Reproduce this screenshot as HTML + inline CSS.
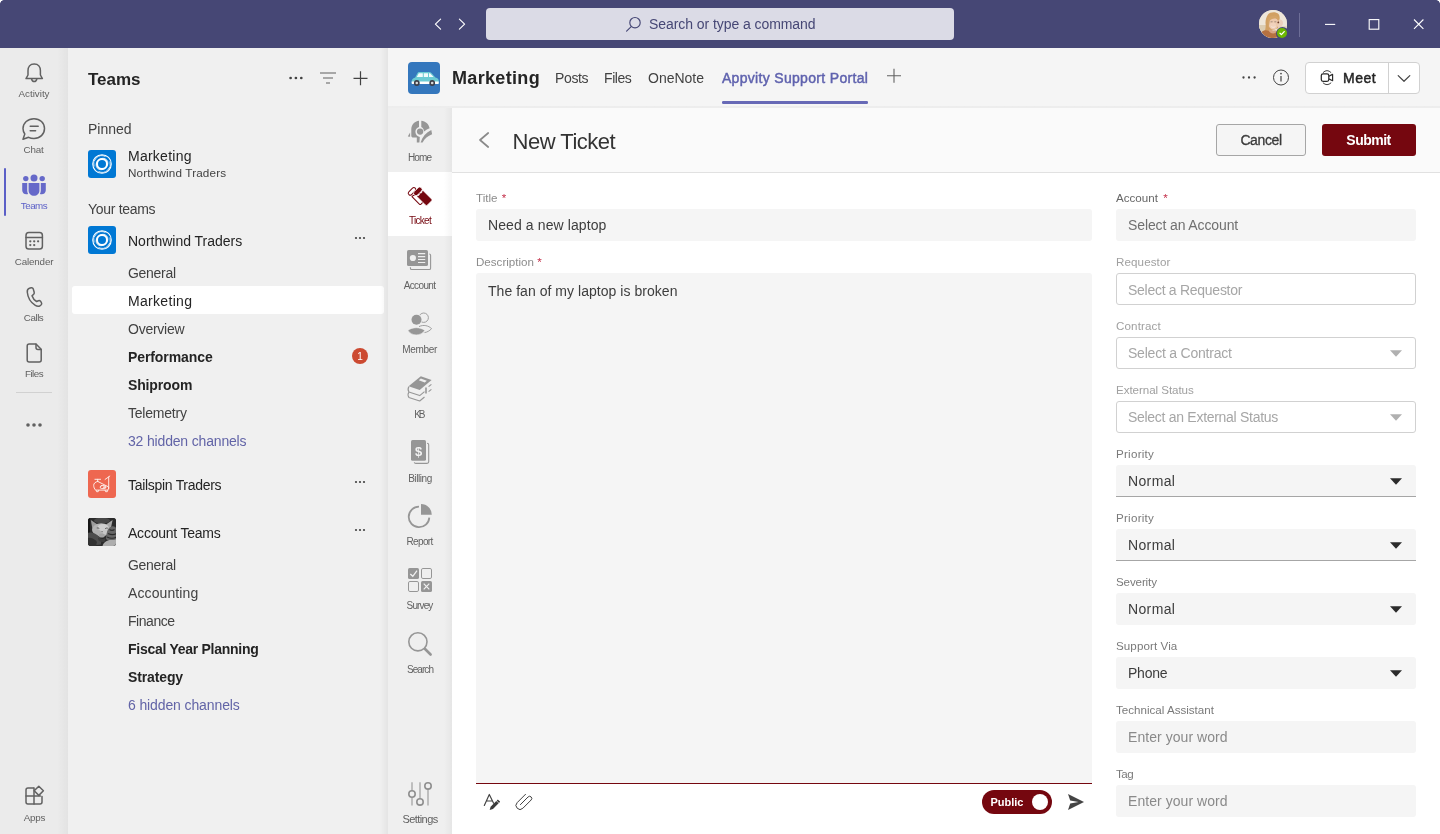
<!DOCTYPE html>
<html lang="en">
<head>
<meta charset="utf-8">
<title>Marketing - Appvity Support Portal</title>
<style>
*{box-sizing:border-box;margin:0;padding:0}
html,body{width:1440px;height:834px;overflow:hidden;background:#fff}
body{will-change:transform;font-family:"Liberation Sans",sans-serif;color:#242424;position:relative;font-size:14px}
.abs{position:absolute}
.t{position:absolute;white-space:nowrap;line-height:1;transform:translateY(-50%)}
.c{transform:translate(-50%,-50%)}
svg{position:absolute;overflow:visible}
/* title bar */
#titlebar{left:0;top:0;width:1440px;height:48px;background:#464775}
#search{left:486px;top:8px;width:468px;height:32px;background:#dbdbe6;border-radius:4px}
/* rail */
#rail{left:0;top:48px;width:68px;height:786px;background:#ebebeb}
.rl{font-size:9.8px;color:#616161}
/* teams panel */
#panel{left:68px;top:48px;width:320px;height:786px;background:#f0f0f0}
.ch{font-size:14px;color:#424242;left:128px}
.chb{font-size:14px;color:#242424;font-weight:bold;left:128px}
.lnk{font-size:14px;color:#6264a7;left:128px}
.sec{font-size:14px;color:#424242;left:88px}
.tm{font-size:14px;color:#242424;left:128px}
.av{position:absolute;left:88px;width:28px;height:28px;border-radius:3px;overflow:hidden}
/* main header */
#hdr{left:388px;top:48px;width:1052px;height:60px;background:#f5f5f5;border-bottom:2px solid;border-image:linear-gradient(to bottom,#e6e6e6,#ededed) 1}
.tab{font-size:14px;color:#424242}
/* app side */
#side{left:388px;top:108px;width:64px;height:726px;background:#efefef}
.sl{font-size:10px;color:#616161}
/* content */
#chead{left:452px;top:108px;width:988px;height:65px;background:#fafafa;border-bottom:1px solid #e1e1e1}
#form{left:452px;top:173px;width:988px;height:661px;background:#fff}
.lab{font-size:11.6px;color:#7a7a7a}
.req{color:#c4314b}
.inp{position:absolute;height:32px;border-radius:3px;background:#f5f5f5}
.inpo{position:absolute;height:32px;border-radius:3px;background:#fff;border:1px solid #d1d1d1}
.ph{font-size:14px;color:#7f7f7f}
.val{font-size:14px;color:#3d3d3d}
</style>
</head>
<body>
<div id="titlebar" class="abs">
<div class="abs" style="left:0;top:0;width:4px;height:4px;background:radial-gradient(circle at 4px 4px,#464775 3.5px,#fff 4.2px)"></div>
<div class="abs" style="left:1436px;top:0;width:4px;height:4px;background:radial-gradient(circle at 0 4px,#464775 3.5px,#fff 4.2px)"></div>
<svg style="left:430px;top:14px" width="40" height="20" viewBox="430 14 40 20" fill="none" stroke="#fff" stroke-width="1.150" stroke-linecap="round" stroke-linejoin="round"><path d="M440.600 19.200 L435.400 24.200 L440.600 29.200"/><path d="M459.400 19.200 L464.600 24.200 L459.400 29.200"/></svg>
<div id="search" class="abs"></div>
<svg style="left:624px;top:14px" width="20" height="20" viewBox="624 14 20 20" fill="none" stroke="#464775" stroke-width="1.150" stroke-linecap="round"><circle cx="635" cy="22.700" r="5.200"/><path d="M631.2 26.6 L626.6 31.2"/></svg>
<div class="t" id="h_search" style="left:649.000px;top:24px;font-size:14px;color:#464775;letter-spacing:-0.067px">Search or type a command</div>
<div class="abs" style="left:1259px;top:10px;width:28px;height:28px;border-radius:50%;overflow:hidden;background:#e9dfd0">
<svg style="left:0;top:0" width="28" height="28" viewBox="0 0 28 28"><defs><filter id="bl" x="-20%" y="-20%" width="140%" height="140%"><feGaussianBlur stdDeviation="0.550"/></filter></defs><rect width="28" height="28" fill="#eee6d9"/><g filter="url(#bl)"><rect x="-2" y="15" width="12" height="14" fill="#dccdb2"/><rect x="18" y="16" width="12" height="4" fill="#e2d6c0"/><path d="M9 4.500 C11 1.800 17 1.500 19.500 4 C21 6 21 9 20 11.500 L19 18 L12 21 C12 23 11 26 9.500 28 L4 24 C6.500 21 7 17 6.500 13 C6.500 9.500 7.500 6.500 9 4.500 Z" fill="#d1a063"/><ellipse cx="14.400" cy="13.400" rx="5.100" ry="6.300" fill="#edc9ae"/><ellipse cx="14" cy="15.500" rx="3.200" ry="3" fill="#f1d2bc"/><path d="M9.200 9.500 C10 6 14 4.800 17.500 6 C19.500 7 20.200 8.500 19.800 10.300 C17.500 7.800 13.500 7.600 10.800 10.500 C10.400 13 10 16 9 19 C8.400 15.500 8.600 12 9.200 9.500 Z" fill="#d4a468"/><path d="M2.500 22 C5 19.500 8 20 10 21 C12 22.500 15 23 17.500 21 L19 28 H6 Z" fill="#b6713f"/><path d="M10 21 C11 23 14 24.500 17 22.500 L16.500 20 C14.500 21 12 20.500 10.500 19 Z" fill="#d9a585"/><path d="M19.500 10 C21.500 8.500 24 10 24 13 C24 15.500 22 17.500 19.500 18.500 C19 16 19.800 13 19.500 10 Z" fill="#ecd0bd"/><circle cx="19.300" cy="12.400" r="0.900" fill="#6b3b2b"/><path d="M11.600 11.800 h2 M15.300 11.800 h2" stroke="#8d7a6a" stroke-width="0.700"/><path d="M12.400 16.600 C13.500 17.600 15.200 17.600 16.300 16.600" stroke="#f7ece6" stroke-width="0.800" fill="none"/></g></svg></div>
<div class="abs" style="left:1275.500px;top:26.500px;width:13px;height:13px;border-radius:50%;background:#464775"></div>
<div class="abs" style="left:1277px;top:28px;width:10px;height:10px;border-radius:50%;background:#6bb700"></div>
<svg style="left:1277px;top:28px" width="10" height="10" viewBox="0 0 10 10" fill="none" stroke="#fff" stroke-width="1.300" stroke-linecap="round" stroke-linejoin="round"><path d="M3 5.200 L4.400 6.600 L7.200 3.600"/></svg>
<div class="abs" style="left:1299px;top:13px;width:1px;height:24px;background:#6d6e97"></div>
<svg style="left:1320px;top:14px" width="110" height="20" viewBox="1320 14 110 20" fill="none" stroke="#fff" stroke-width="1.1"><path d="M1325 24.4 H1335.2"/><rect x="1369.2" y="19.6" width="9.6" height="9.6"/><path d="M1414 19.5 L1423.4 28.9 M1423.4 19.5 L1414 28.9"/></svg>
</div>
<div id="rail" class="abs">
<div class="abs" style="right:0;top:0;width:11px;height:786px;background:linear-gradient(to right,rgba(0,0,0,0),rgba(0,0,0,.035))"></div>
</div>
<!-- rail icons (page coords) -->
<svg style="left:0;top:48px" width="68" height="786" viewBox="0 48 68 786" fill="none" stroke="#616161" stroke-width="1.5" stroke-linecap="round" stroke-linejoin="round">
<!-- bell -->
<path d="M34.2 64 C29.9 64 28 67.2 28 70.6 V75 L26 78.6 H42.4 L40.4 75 V70.6 C40.4 67.2 38.5 64 34.2 64 Z"/><path d="M31.6 79 C31.9 80.6 33 81.5 34.2 81.5 C35.4 81.5 36.5 80.6 36.8 79"/>
<!-- chat -->
<path d="M34 118.7 C40 118.7 44.5 123 44.5 128.6 C44.5 134.2 40 138.5 34 138.5 C32 138.5 30.2 138.1 28.6 137.3 L23 139.2 L24.8 134 C23.6 132.4 23 130.6 23 128.6 C23 123 27.8 118.7 34 118.700 Z"/><path d="M30.200 126.300 H38.200 M30.200 130.800 H35.600"/>
<!-- calendar -->
<rect x="26" y="232.600" width="16.400" height="16.400" rx="2.800"/><path d="M26 237.400 H42.400"/>
<g fill="#616161" stroke="none"><circle cx="30.300" cy="241.300" r="1.150"/><circle cx="34.200" cy="241.300" r="1.150"/><circle cx="38.100" cy="241.300" r="1.150"/><circle cx="30.300" cy="245.100" r="1.150"/><circle cx="34.200" cy="245.100" r="1.150"/></g>
<!-- phone -->
<path d="M29.400 288.200 L31.200 287.800 C32.200 287.600 33 288.200 33.300 289.100 L34.200 292.300 C34.400 293.100 34.200 293.900 33.600 294.400 L32 295.800 C32.800 298.300 34.400 300.200 36.600 301.500 L38.400 300.700 C39.200 300.400 40 300.600 40.500 301.200 L41.400 302.600 C41.900 303.400 41.700 304.400 41 305 L40.200 305.600 C38.800 306.600 36.900 306.400 35.300 305.400 C30.800 302.600 27.800 297.600 27.300 292.300 C27.100 290.400 27.800 288.700 29.400 288.200 Z"/>
<!-- file -->
<path d="M29.200 344 H36 L41.200 349.200 V360 C41.200 361.100 40.300 362 39.200 362 H29.200 C28.100 362 27.200 361.100 27.200 360 V346 C27.200 344.900 28.100 344 29.200 344 Z"/><path d="M36 344.200 V347.400 C36 348.500 36.900 349.400 38 349.400 H41"/>
<!-- apps -->
<path d="M33.600 788 H28 C26.900 788 26 788.900 26 790 V802 C26 803.100 26.900 804 28 804 H40 C41.100 804 42 803.100 42 802 V796.600"/><path d="M26 796 H40.500 M34 788 V804"/><path d="M38.800 786.200 L43.400 790.800 L38.800 795.400 L34.200 790.800 Z" stroke-linejoin="round"/>
</svg>
<!-- teams icon -->
<svg style="left:20px;top:172px" width="28" height="26" viewBox="20 172 28 26" fill="#5b5fc7" opacity=".92"><circle cx="34" cy="178" r="3.500"/><circle cx="25.800" cy="178.600" r="2.700"/><circle cx="42.200" cy="178.600" r="2.700"/><path d="M28.600 183 H39.400 V190.500 C39.400 193.600 37 195.800 34 195.800 C31 195.800 28.600 193.600 28.600 190.500 Z"/><path d="M22.200 183 H27.200 V190.500 C27.200 191.800 27.500 193 28.100 194 C27.500 194.200 26.900 194.300 26.300 194.300 C24 194.300 22.200 192.500 22.200 190.200 Z"/><path d="M45.800 183 H40.800 V190.500 C40.800 191.800 40.500 193 39.900 194 C40.500 194.200 41.100 194.300 41.700 194.300 C44 194.300 45.800 192.500 45.800 190.200 Z"/></svg>
<div class="abs" style="left:4px;top:168px;width:2px;height:48px;background:#5b5fc7;border-radius:1px"></div>
<div class="t c rl" id="r_act" style="left:34.000px;top:93.500px;letter-spacing:0.000px">Activity</div>
<div class="t c rl" id="r_chat" style="left:33.550px;top:149.500px;letter-spacing:-0.180px">Chat</div>
<div class="t c rl" id="r_teams" style="left:34.000px;top:205.500px;color:#5b5fc7;letter-spacing:-0.504px">Teams</div>
<div class="t c rl" id="r_cal" style="left:34.000px;top:261.500px;letter-spacing:-0.144px">Calender</div>
<div class="t c rl" id="r_calls" style="left:33.550px;top:317.500px;letter-spacing:-0.450px">Calls</div>
<div class="t c rl" id="r_files" style="left:34.000px;top:373.500px;letter-spacing:-0.495px">Files</div>
<div class="abs" style="left:16px;top:392px;width:36px;height:1px;background:#d1d1d1"></div>
<svg style="left:24px;top:420px" width="20" height="10" viewBox="24 420 20 10" fill="#616161"><circle cx="28" cy="425" r="1.800"/><circle cx="34" cy="425" r="1.800"/><circle cx="40" cy="425" r="1.800"/></svg>
<div class="t c rl" id="r_apps" style="left:34.450px;top:817.600px;letter-spacing:-0.180px">Apps</div>
<div id="panel" class="abs"></div>
<div class="t" id="p_teams" style="left:88.000px;top:78.500px;font-size:17px;font-weight:bold;color:#242424;letter-spacing:-0.009px">Teams</div>
<svg style="left:286px;top:68px" width="90" height="20" viewBox="286 68 90 20" fill="none"><g fill="#424242"><circle cx="290.600" cy="78" r="1.350"/><circle cx="295.900" cy="78" r="1.350"/><circle cx="301.300" cy="78" r="1.350"/></g><path d="M320 73 H336 M323 78 H333 M326 83 H330" stroke="#8f8f8f" stroke-width="1.500"/><path d="M353.500 78.300 H367.500 M360.500 71.300 V85.300" stroke="#424242" stroke-width="1.200"/></svg>
<div class="t sec" id="p_pinned" style="top:128.5px;letter-spacing:-0.000px;left:88.000px">Pinned</div>
<div class="av" style="top:150px"><svg style="left:0;top:0" width="28" height="28" viewBox="0 0 28 28" fill="none" stroke="#fff"><rect width="28" height="28" fill="#0078d4" stroke="none"/><circle cx="14" cy="14" r="9.300" stroke-width="1.050"/><path d="M6 16.600 A8.300 8.300 0 0 1 17.500 6.500 M22 11.400 A8.300 8.300 0 0 1 10.500 21.500" stroke-width="0.800"/><circle cx="14" cy="14" r="5" stroke-width="2"/><ellipse cx="14" cy="14" rx="6.300" ry="5.300" transform="rotate(-40 14 14)" stroke-width="0.700"/></svg></div>
<div class="t tm" id="p_mk" style="top:155.5px;left:128.000px;letter-spacing:0.251px">Marketing</div>
<div class="t" id="p_nw12" style="left:128.000px;top:172.500px;font-size:11.7px;color:#424242;letter-spacing:0.163px">Northwind Traders</div>
<div class="t sec" id="p_your" style="top:208.5px;letter-spacing:-0.300px;left:88.000px">Your teams</div>
<div class="av" style="top:226px"><svg style="left:0;top:0" width="28" height="28" viewBox="0 0 28 28" fill="none" stroke="#fff"><rect width="28" height="28" fill="#0078d4" stroke="none"/><circle cx="14" cy="14" r="9.300" stroke-width="1.050"/><path d="M6 16.600 A8.300 8.300 0 0 1 17.500 6.500 M22 11.400 A8.300 8.300 0 0 1 10.500 21.500" stroke-width="0.800"/><circle cx="14" cy="14" r="5" stroke-width="2"/><ellipse cx="14" cy="14" rx="6.300" ry="5.300" transform="rotate(-40 14 14)" stroke-width="0.700"/></svg></div>
<div class="t tm" id="p_nw" style="top:240.5px;letter-spacing:-0.007px;left:128.000px">Northwind Traders</div>
<div class="t ch" id="c_gen" style="top:272.5px;letter-spacing:-0.300px;left:128.000px">General</div>
<div class="abs" style="left:72px;top:286px;width:312px;height:28px;background:#fff;border-radius:3px"></div>
<div class="t ch" id="c_mk" style="top:300.5px;color:#242424;left:128.000px;letter-spacing:0.312px">Marketing</div>
<div class="t ch" id="c_ov" style="top:328.5px;letter-spacing:-0.256px;left:128.000px">Overview</div>
<div class="t chb" id="c_pf" style="top:356.5px;letter-spacing:-0.090px;left:128.000px">Performance</div>
<div class="abs" style="left:352px;top:348px;width:16px;height:16px;border-radius:50%;background:#cc4a31"></div>
<div class="t c" style="left:360px;top:356.500px;font-size:10px;color:#fff">1</div>
<div class="t chb" id="c_sh" style="top:384.5px;letter-spacing:-0.136px;left:128.000px">Shiproom</div>
<div class="t ch" id="c_tl" style="top:412.5px;letter-spacing:-0.223px;left:128.000px">Telemetry</div>
<div class="t lnk" id="c_h32" style="top:440.5px;letter-spacing:-0.169px;left:128.000px">32 hidden channels</div>
<div class="av" style="top:470px;background:#ee6750"><svg style="left:0;top:0" width="28" height="28" viewBox="0 0 28 28" fill="none" stroke="#fdeeea" stroke-width="0.950" stroke-linecap="round" stroke-linejoin="round"><path d="M6.900 9.300 H12.600 M9.700 9.300 V11.300"/><path d="M17.100 9.400 L21.800 6.100 M20.700 7 V18.800"/><path d="M9.700 11.400 C7 12 5.700 13.600 5.700 15.300 C5.700 17.300 6.400 18.800 7.600 20.100 H19.600 C20.400 19.500 20.800 18.500 20.700 17 L9.700 11.400 Z"/><rect x="12.200" y="15.600" width="5.700" height="3" rx="1.500"/><circle cx="16.300" cy="17.300" r="0.800"/><path d="M8.100 20.300 L8.600 21.700 H10.200 L10.700 20.300 M17.100 20.300 L17.600 21.700 H19.300 L19.800 20.300"/></svg></div>
<div class="t tm" id="p_ts" style="top:484.5px;letter-spacing:-0.300px;left:128.000px">Tailspin Traders</div>
<div class="av" style="top:518px;background:#2a2a2a"><svg style="left:0;top:0" width="28" height="28" viewBox="0 0 28 28"><defs><filter id="cb" x="-20%" y="-20%" width="140%" height="140%"><feGaussianBlur stdDeviation="0.650"/></filter></defs><rect width="28" height="28" fill="#2b2b2b"/><g filter="url(#cb)"><ellipse cx="14" cy="2.500" rx="8" ry="3" fill="#474747"/><rect x="-1" y="0" width="3" height="16" fill="#161616"/><path d="M2.800 1.900 L9.500 6.500 L4.800 13 Z" fill="#9c9c9c"/><path d="M24.600 1.900 L18 6.500 L22.500 12 Z" fill="#aaa"/><ellipse cx="13.200" cy="11.800" rx="9.200" ry="6.600" fill="#b4b4b4"/><ellipse cx="15" cy="9.500" rx="5.500" ry="3.500" fill="#cfcfcf"/><ellipse cx="17.500" cy="14" rx="3" ry="2.500" fill="#c6c6c6"/><ellipse cx="9.500" cy="14.500" rx="3.200" ry="2.600" fill="#b0b0b0"/><path d="M-1 15 C3 13.500 8 15.500 10.500 18 C12.500 20 13.500 23 13 26.500 L-1 28 Z" fill="#4e4e4e"/><path d="M-1 20 C3 19 7 21 9 24 L8 28 H-1 Z" fill="#333"/><ellipse cx="13.800" cy="17.500" rx="3" ry="2" fill="#a2a2a2"/><path d="M18.500 16 C19 12 21 9 24 8.200 C27 8 29 10 29 13 V23 C25 24 20 23 18 21 Z" fill="#666"/><path d="M21.500 11.500 C23 12.500 25 12.500 26.500 11.500 M20 15.500 C23 17 26 17 28.500 15.500 M19 19 C22 20.500 26 20.500 28.500 19" stroke="#2c2c2c" stroke-width="1.100" fill="none"/><path d="M14.500 28.500 C15 24.500 19 22 23 22 C26 22 28 21.500 29 20.500 V28.500 Z" fill="#adadad"/><path d="M10 19.500 C12 21 15 21.500 17.500 20 L17 23.500 C15 24.500 12 24 10.500 22.500 Z" fill="#3c3c3c"/><path d="M8.800 10 C9.600 9.700 10.600 9.900 11.300 10.500 M17.200 10.600 C18 10 19 9.900 19.800 10.200" stroke="#4a4a4a" stroke-width="0.900" fill="none"/><path d="M13.300 13 H14.900 L14.100 14.200 Z" fill="#6a6a6a"/></g></svg></div>
<div class="t tm" id="p_at" style="top:532.5px;letter-spacing:-0.225px;left:128.000px">Account Teams</div>
<svg style="left:350px;top:230px" width="20" height="310" viewBox="350 230 20 310" fill="#424242"><circle cx="356" cy="238" r="1.100"/><circle cx="360" cy="238" r="1.100"/><circle cx="364" cy="238" r="1.100"/><circle cx="356" cy="482" r="1.100"/><circle cx="360" cy="482" r="1.100"/><circle cx="364" cy="482" r="1.100"/><circle cx="356" cy="530" r="1.100"/><circle cx="360" cy="530" r="1.100"/><circle cx="364" cy="530" r="1.100"/></svg>
<div class="t ch" id="c_g2" style="top:564.5px;letter-spacing:-0.300px;left:128.000px">General</div>
<div class="t ch" id="c_ac" style="top:592.5px;letter-spacing:0.100px;left:128.000px">Accounting</div>
<div class="t ch" id="c_fi" style="top:620.5px;letter-spacing:-0.450px;left:128.000px">Finance</div>
<div class="t chb" id="c_fy" style="top:648.5px;letter-spacing:-0.273px;left:128.000px">Fiscal Year Planning</div>
<div class="t chb" id="c_st" style="top:676.5px;letter-spacing:-0.134px;left:128.000px">Strategy</div>
<div class="t lnk" id="c_h6" style="top:704.5px;letter-spacing:-0.116px;left:128.000px">6 hidden channels</div>
<div id="hdr" class="abs"></div>
<div class="abs" style="left:380px;top:48px;width:8px;height:786px;background:linear-gradient(to right,rgba(0,0,0,0),rgba(0,0,0,.05))"></div>
<div class="abs" style="left:408px;top:62px;width:32px;height:32px;border-radius:4px;background:#3477bd;overflow:hidden"><svg style="left:0;top:-0.800px" width="32" height="32" viewBox="0 0 32 32"><path d="M3.600 21.800 C3.400 19 4.600 17.200 7.200 16.600 L9.400 12.200 C9.800 11.300 10.500 11 11.400 11 H21 C22 11 22.700 11.300 23.400 12 L27.400 16.400 C29.600 16.800 30.800 18 30.800 20 V21.800 C30.800 22.600 30.400 23 29.600 23 H4.800 C4 23 3.600 22.600 3.600 21.800 Z" fill="#6ccbd3"/><path d="M3.700 20.500 H30.700 V22 C30.700 22.600 30.300 23 29.700 23 H4.800 C4.100 23 3.700 22.600 3.700 22 Z" fill="#fff"/><path d="M10.800 12.200 H14.800 V16 H8.800 Z M15.800 12.200 H20 V16 H15.800 Z M21 12.200 H22 L25.600 16 H21 Z" fill="#f2fbfc"/><circle cx="8.800" cy="22" r="2.900" fill="#3b3f4a"/><circle cx="8.800" cy="22" r="1.300" fill="#d9d9d9"/><circle cx="24.200" cy="22" r="2.900" fill="#3b3f4a"/><circle cx="24.200" cy="22" r="1.300" fill="#d9d9d9"/></svg></div>
<div class="t" id="h_mk" style="left:452.000px;top:77.500px;font-size:18px;font-weight:bold;color:#242424;letter-spacing:0.335px">Marketing</div>
<div class="t tab" id="h_posts" style="left:555.100px;top:78px;letter-spacing:-0.405px">Posts</div>
<div class="t tab" id="h_files" style="left:604.100px;top:78px;letter-spacing:-0.495px">Files</div>
<div class="t tab" id="h_one" style="left:648.000px;top:78px;letter-spacing:0.000px">OneNote</div>
<div class="t tab" id="h_app" style="left:721.900px;top:78px;color:#5f62ae;font-weight:normal;-webkit-text-stroke:0.450px;letter-spacing:0.320px">Appvity Support Portal</div>
<div class="abs" style="left:721.500px;top:101.200px;width:146px;height:2.500px;border-radius:1.250px;background:#6769b6"></div>
<svg style="left:884px;top:66px" width="20" height="20" viewBox="884 66 20 20" fill="none" stroke="#616161" stroke-width="1.100"><path d="M887 75.800 H901 M894 68.800 V82.800"/></svg>
<svg style="left:1238px;top:66px" width="56" height="24" viewBox="1238 66 56 24" fill="none"><g fill="#424242"><circle cx="1243.500" cy="77.500" r="1.150"/><circle cx="1249" cy="77.500" r="1.150"/><circle cx="1254.600" cy="77.500" r="1.150"/></g><circle cx="1281" cy="77.500" r="7.500" stroke="#424242" stroke-width="1"/><path d="M1281 76 V81.500" stroke="#424242" stroke-width="1.200"/><circle cx="1281" cy="73.600" r="0.850" fill="#424242"/></svg>
<div class="abs" style="left:1305px;top:62px;width:115px;height:32px;border-radius:4px;background:#fff;border:1px solid #d1d1d1"></div>
<div class="abs" style="left:1388px;top:63px;width:1px;height:30px;background:#d1d1d1"></div>
<svg style="left:1316px;top:66px" width="100" height="24" viewBox="1316 66 100 24" fill="none" stroke="#424242" stroke-width="1.100" stroke-linecap="round" stroke-linejoin="round"><rect x="1321.300" y="73.800" width="7.500" height="7.500" rx="1.800" stroke="#2b2b2b" stroke-width="1.250"/><path d="M1329.300 76 L1332.600 74.400 V80.700 L1329.300 79.100" stroke="#2b2b2b" stroke-width="1.200"/><path d="M1323.200 72.400 Q1327 68.600 1330.900 72.400 M1323.200 83 Q1327 86.600 1330.900 83" stroke-width="1"/><path d="M1398.200 75.600 L1404 81.300 L1409.800 75.600" stroke-width="1.200"/></svg>
<div class="t" id="h_meet" style="left:1343.100px;top:78px;font-size:14px;font-weight:normal;-webkit-text-stroke:0.450px;color:#242424;letter-spacing:0.450px">Meet</div>
<div id="side" class="abs"><div class="abs" style="left:0;top:64px;width:64px;height:64px;background:#fff"></div><div class="abs" style="right:0;top:0;width:8px;height:727px;background:linear-gradient(to right,rgba(0,0,0,0),rgba(0,0,0,.04))"></div></div>
<svg style="left:388px;top:107px" width="64" height="727" viewBox="388 107 64 727" fill="none">
<!-- home -->
<g fill="#969696"><path d="M419 120.700 C414.500 121.200 411.300 124.800 411.300 129.500 V135.800 C411.300 137 412 137.600 413.300 137.600 H416.800 V142.600 H419.400 L419.800 137 C417.200 136.400 415.400 134.300 415.400 131.700 C415.400 129.400 416.900 127.600 419 127 Z"/><path d="M421.300 120.700 C425.600 121.100 428.700 123.900 429.600 128.200 C427.200 129.100 425.400 130.300 424 131.600 C423.900 129.400 422.900 127.700 421.300 127 Z"/><circle cx="420.100" cy="131.600" r="3.150"/><path d="M420.600 142.600 C422.400 136.600 426 132.400 431.300 130 L432.100 134.200 C427.800 135.800 424.600 138.600 422.600 142.600 Z"/><path d="M410.100 132.400 L410.100 136.800 L407.800 136.400 Z"/></g>
<!-- ticket -->
<g transform="translate(418.800 198.100) rotate(45)" fill="#fff" stroke="#75070f" stroke-width="1"><rect x="-11.500" y="-4.500" width="3.900" height="9" rx="1.900"/><path d="M-5.800 -3.800 H4.600 C5.400 -3.800 5.800 -3.400 5.800 -2.600 V2.600 C5.800 3.400 5.400 3.800 4.600 3.800 H-5.800 V2 C-5 1.600 -5 0.600 -5.800 0.200 Z"/></g>
<g transform="translate(424.400 197.900) rotate(45)" fill="#75070f" stroke="#fff" stroke-width="0.700"><rect x="-11.600" y="-5" width="4.700" height="10" rx="2.200"/><path d="M-6.300 -4.300 H5.700 C6.700 -4.300 7.200 -3.800 7.200 -2.800 V2.800 C7.200 3.800 6.700 4.300 5.700 4.300 H-6.300 V2.800 C-5.500 2.400 -5.500 1.200 -6.300 0.800 V-0.800 C-5.500 -1.200 -5.500 -2.400 -6.300 -2.800 Z"/></g>
<!-- account -->
<rect x="407" y="250" width="21" height="16" rx="1.600" fill="#969696"/><circle cx="412.900" cy="258" r="3.100" fill="#efefef"/><path d="M418 253.600 H425.200 M418 256.600 H425.200 M418 259.500 H425.200 M418 262.500 H425.200" stroke="#efefef" stroke-width="1.200"/><path d="M429.300 254 C430.100 254 430.600 254.500 430.600 255.300 V268.200 C430.600 269 430.100 269.500 429.300 269.500 H411.700 C410.900 269.500 410.400 269 410.400 268.200 V267.300" stroke="#969696" stroke-width="1.100"/>
<!-- member -->
<circle cx="423.700" cy="317.700" r="4.700" stroke="#969696" stroke-width="0.900"/><circle cx="416.500" cy="319.800" r="5.600" fill="#efefef"/><circle cx="416.500" cy="319.800" r="5" fill="#969696"/><path d="M419 326.600 C423.500 324.400 428.500 325.600 431.600 328.600 C429.500 331 427 332.200 424.500 332.600" stroke="#969696" stroke-width="0.900"/><path d="M407.900 330.400 C412.500 326.800 420 326.800 424.800 330.400 C421 336.400 411.500 336.400 407.900 330.400 Z" fill="#969696" stroke="#efefef" stroke-width="0.600"/>
<!-- kb -->
<path d="M420.800 376.200 L431.600 380.100 L419.700 390 L408.600 386.200 Z" fill="#969696"/><path d="M420.800 378.600 L426.800 380.800 L424.800 382.500 L418.800 380.300 Z" fill="#efefef"/><path d="M408.900 386.600 C408 388 408 390.500 408.900 392 L419.700 395.600 L424.500 391.600 M408.900 392 C408 393.400 408 396 408.900 397.400 L419.700 401 L424.500 397" stroke="#969696" stroke-width="1.100" stroke-linejoin="round"/><path d="M426 387.500 V393.500" stroke="#969696" stroke-width="1.600"/><path d="M428.600 386.600 L431.400 384.400 M428.600 391.600 L431.400 389.400" stroke="#969696" stroke-width="1.100"/>
<!-- billing -->
<rect x="411" y="440" width="15" height="20.800" rx="1.600" fill="#969696"/><path d="M427 443.200 C428.100 443.200 428.700 443.800 428.700 444.800 V461.800 C428.700 462.800 428.100 463.400 427 463.400 H415.800 C414.900 463.400 414.400 463 414.300 462.200" stroke="#969696" stroke-width="1.100"/>
<!-- report -->
<path d="M419 506.600 A10.300 10.300 0 1 0 429.300 517.600" stroke="#969696" stroke-width="1.800"/><path d="M421 504 A10.800 10.800 0 0 1 431.800 514.800 H421 Z" fill="#969696"/>
<!-- survey -->
<rect x="408" y="568" width="11" height="11" rx="1.600" fill="#969696"/><rect x="421.500" y="568.500" width="10" height="10" rx="1.400" stroke="#969696" stroke-width="1"/><rect x="408.500" y="581.500" width="10" height="10" rx="1.400" stroke="#969696" stroke-width="1"/><rect x="421" y="581" width="11" height="11" rx="1.600" fill="#969696"/><path d="M410.300 574 L412.800 576.300 L417 570.700" stroke="#f2f2f2" stroke-width="1.300"/><path d="M423.700 583.700 L429.300 589.300 M429.300 583.700 L423.700 589.300" stroke="#f2f2f2" stroke-width="1.200"/>
<!-- search -->
<circle cx="417.900" cy="641.800" r="9.100" stroke="#969696" stroke-width="1.600"/><path d="M424.800 648.800 L430.600 654.500" stroke="#969696" stroke-width="2.600" stroke-linecap="round"/>
<!-- settings -->
<path d="M412 782.200 V805.600 M420 782.200 V805.600 M428 782.200 V805.600" stroke="#b9b9b9" stroke-width="1.800"/><g fill="#efefef" stroke="#8f8f8f" stroke-width="1.600"><circle cx="412" cy="794" r="3.200"/><circle cx="420" cy="801.900" r="3.200"/><circle cx="428" cy="785.900" r="3.200"/></g>
</svg>
<div class="t c" style="left:418.500px;top:450.600px;font-size:13px;font-weight:bold;color:#f2f2f2">$</div>
<div class="t c sl" id="s_home" style="left:419.550px;top:157.7px;letter-spacing:-0.840px">Home</div>
<div class="t c sl" id="s_ticket" style="left:420.000px;top:220.7px;color:#75070f;letter-spacing:-0.684px">Ticket</div>
<div class="t c sl" id="s_acc" style="left:419.550px;top:285.6px;letter-spacing:-0.630px">Account</div>
<div class="t c sl" id="s_mem" style="left:419.550px;top:349.6px;letter-spacing:-0.324px">Member</div>
<div class="t c sl" id="s_kb" style="left:418.650px;top:414.7px;letter-spacing:-2.160px">KB</div>
<div class="t c sl" id="s_bill" style="left:420.000px;top:478.7px;letter-spacing:-0.420px">Billing</div>
<div class="t c sl" id="s_rep" style="left:419.550px;top:541.7px;letter-spacing:-0.684px">Report</div>
<div class="t c sl" id="s_sur" style="left:419.550px;top:605.7px;letter-spacing:-0.864px">Survey</div>
<div class="t c sl" id="s_sea" style="left:420.000px;top:669.7px;letter-spacing:-0.936px">Search</div>
<div class="t c sl" id="s_set" style="left:420.050px;top:819px;font-size:11px;letter-spacing:-0.563px">Settings</div>
<div id="chead" class="abs"></div>
<svg style="left:474px;top:128px" width="20" height="24" viewBox="474 128 20 24" fill="none" stroke="#8a8a8a" stroke-width="1.700" stroke-linecap="round" stroke-linejoin="round"><path d="M488.200 133 L480 140 L488.200 147"/></svg>
<div class="t" id="n_title" style="left:512.600px;top:141.500px;font-size:22px;color:#333;letter-spacing:-0.500px">New Ticket</div>
<div class="abs" style="left:1216px;top:124px;width:90px;height:32px;border-radius:3px;background:#f5f5f5;border:1px solid #a6a6a6"></div>
<div class="t c" id="b_cancel" style="left:1261.000px;top:140px;font-size:14px;color:#3b3b3b;-webkit-text-stroke:0.300px #3b3b3b;letter-spacing:-0.396px">Cancel</div>
<div class="abs" style="left:1322px;top:124px;width:94px;height:32px;border-radius:3px;background:#75070f"></div>
<div class="t c" id="b_submit" style="left:1368.550px;top:140px;font-size:14px;font-weight:bold;color:#fff;letter-spacing:-0.504px">Submit</div>
<div id="form" class="abs"></div>
<div class="t lab" id="l_title" style="left:476px;top:197.500px;color:#8c8c8c">Title <span class="req" style="margin-left:1px">*</span></div>
<div class="inp" style="left:476px;top:209px;width:616px"></div>
<div class="t val" id="v_title" style="left:488.000px;top:224.5px;letter-spacing:0.102px">Need a new laptop</div>
<div class="t lab" id="l_desc" style="left:476px;top:261.500px;color:#8c8c8c">Description <span class="req">*</span></div>
<div class="inp" style="left:476px;top:273px;width:616px;height:511px;border-radius:3px 3px 0 0;border-bottom:1.500px solid #75070f"></div>
<div class="t val" id="v_desc" style="left:488.000px;top:290.5px;letter-spacing:0.040px">The fan of my laptop is broken</div>
<svg style="left:480px;top:790px" width="60" height="24" viewBox="480 790 60 24" fill="none" stroke="#424242" stroke-linecap="round" stroke-linejoin="round"><path d="M484.300 805.500 L489.300 794.400 L493.600 803.200 M486.500 801 H492.600" stroke-width="1.150"/><g transform="translate(499 800.600) rotate(135)" fill="#3a3a3a" stroke="none"><rect x="0" y="-1.650" width="1.700" height="3.300" rx="0.300"/><path d="M2.200 -1.650 H10.200 L13.200 0 L10.200 1.650 H2.200 Z"/></g><path d="M525.500 794.300 L517.200 802.600 A4 4 0 0 0 522.860 808.260 L531.160 799.960 A2.150 2.150 0 0 0 528.120 796.920 L520.400 804.640" stroke-width="1"/></svg>
<div class="abs" style="left:982px;top:790px;width:70px;height:24px;border-radius:12px;background:#75070f"></div>
<div class="abs" style="left:1032px;top:794px;width:16px;height:16px;border-radius:50%;background:#fff"></div>
<div class="t" id="t_public" style="left:990.500px;top:801.500px;font-size:11px;font-weight:bold;color:#fff;letter-spacing:-0.036px">Public</div>
<svg style="left:1066px;top:792px" width="20" height="20" viewBox="1066 792 20 20"><path d="M1068 794 L1084 802 L1068 810 L1070.200 803.400 L1078.500 802 L1070.200 800.600 Z" fill="#444"/></svg>
<div class="t lab" id="l_acc" style="left:1116px;top:197.5px;color:#666">Account <span class="req" style="margin-left:2px">*</span></div>
<div class="inp" style="left:1116px;top:209px;width:300px"></div>
<div class="t ph" id="v_acc" style="left:1128.000px;top:224.5px;letter-spacing:-0.117px;color:#707070">Select an Account</div>
<div class="t lab" id="l_req" style="left:1116.000px;top:261.5px;letter-spacing:0.110px;color:#a0a0a0">Requestor</div>
<div class="inpo" style="left:1116px;top:273px;width:300px"></div>
<div class="t ph" id="v_req" style="left:1128.000px;top:289.5px;letter-spacing:-0.275px;color:#a6a6a6">Select a Requestor</div>
<div class="t lab" id="l_con" style="left:1116.000px;top:325.5px;letter-spacing:0.123px;color:#a0a0a0">Contract</div>
<div class="inpo" style="left:1116px;top:337px;width:300px"></div>
<div class="t ph" id="v_con" style="left:1128.000px;top:352.5px;letter-spacing:-0.213px;color:#a6a6a6">Select a Contract</div>
<svg style="left:1390px;top:349.5px" width="12" height="7" viewBox="0 0 12 7"><path d="M0 0.300 H12 L6 6.700 Z" fill="#b0b0b0"/></svg>
<div class="t lab" id="l_ext" style="left:1116.000px;top:389.5px;letter-spacing:-0.059px;color:#a0a0a0">External Status</div>
<div class="inpo" style="left:1116px;top:401px;width:300px"></div>
<div class="t ph" id="v_ext" style="left:1128.000px;top:416.5px;letter-spacing:-0.289px;color:#a6a6a6">Select an External Status</div>
<svg style="left:1390px;top:413.5px" width="12" height="7" viewBox="0 0 12 7"><path d="M0 0.300 H12 L6 6.700 Z" fill="#b0b0b0"/></svg>
<div class="t lab" id="l_pri" style="left:1116.000px;top:453.5px;letter-spacing:0.257px">Priority</div>
<div class="inp" style="left:1116px;top:465px;width:300px;border-bottom:1px solid #a6a6a6;border-radius:3px 3px 0 0"></div>
<div class="t val" id="v_pri" style="left:1128.000px;top:480.5px;letter-spacing:0.360px">Normal</div>
<svg style="left:1390px;top:477.5px" width="12" height="7" viewBox="0 0 12 7"><path d="M0 0.300 H12 L6 6.700 Z" fill="#2b2b2b"/></svg>
<div class="t lab" id="l_pri2" style="left:1116.000px;top:517.5px;letter-spacing:0.257px">Priority</div>
<div class="inp" style="left:1116px;top:529px;width:300px;border-bottom:1px solid #a6a6a6;border-radius:3px 3px 0 0"></div>
<div class="t val" id="v_pri2" style="left:1128.000px;top:544.5px;letter-spacing:0.360px">Normal</div>
<svg style="left:1390px;top:541.5px" width="12" height="7" viewBox="0 0 12 7"><path d="M0 0.300 H12 L6 6.700 Z" fill="#2b2b2b"/></svg>
<div class="t lab" id="l_sev" style="left:1116.000px;top:581.5px;letter-spacing:-0.133px">Severity</div>
<div class="inp" style="left:1116px;top:593px;width:300px"></div>
<div class="t val" id="v_sev" style="left:1128.000px;top:608.5px;letter-spacing:0.360px">Normal</div>
<svg style="left:1390px;top:605.5px" width="12" height="7" viewBox="0 0 12 7"><path d="M0 0.300 H12 L6 6.700 Z" fill="#2b2b2b"/></svg>
<div class="t lab" id="l_sup" style="left:1116.000px;top:645.5px;letter-spacing:0.090px">Support Via</div>
<div class="inp" style="left:1116px;top:657px;width:300px"></div>
<div class="t val" id="v_sup" style="left:1128.000px;top:672.5px;letter-spacing:-0.225px">Phone</div>
<svg style="left:1390px;top:669.5px" width="12" height="7" viewBox="0 0 12 7"><path d="M0 0.300 H12 L6 6.700 Z" fill="#2b2b2b"/></svg>
<div class="t lab" id="l_tech" style="left:1116.000px;top:709.5px;letter-spacing:-0.000px">Technical Assistant</div>
<div class="inp" style="left:1116px;top:721px;width:300px"></div>
<div class="t ph" id="v_tech" style="left:1128.000px;top:736.5px;letter-spacing:0.055px;color:#8a8a8a">Enter your word</div>
<div class="t lab" id="l_tag" style="left:1116.000px;top:773.5px;letter-spacing:-0.450px">Tag</div>
<div class="inp" style="left:1116px;top:785px;width:300px"></div>
<div class="t ph" id="v_tag" style="left:1128.000px;top:800.5px;letter-spacing:0.055px;color:#8a8a8a">Enter your word</div>

</body>
</html>
